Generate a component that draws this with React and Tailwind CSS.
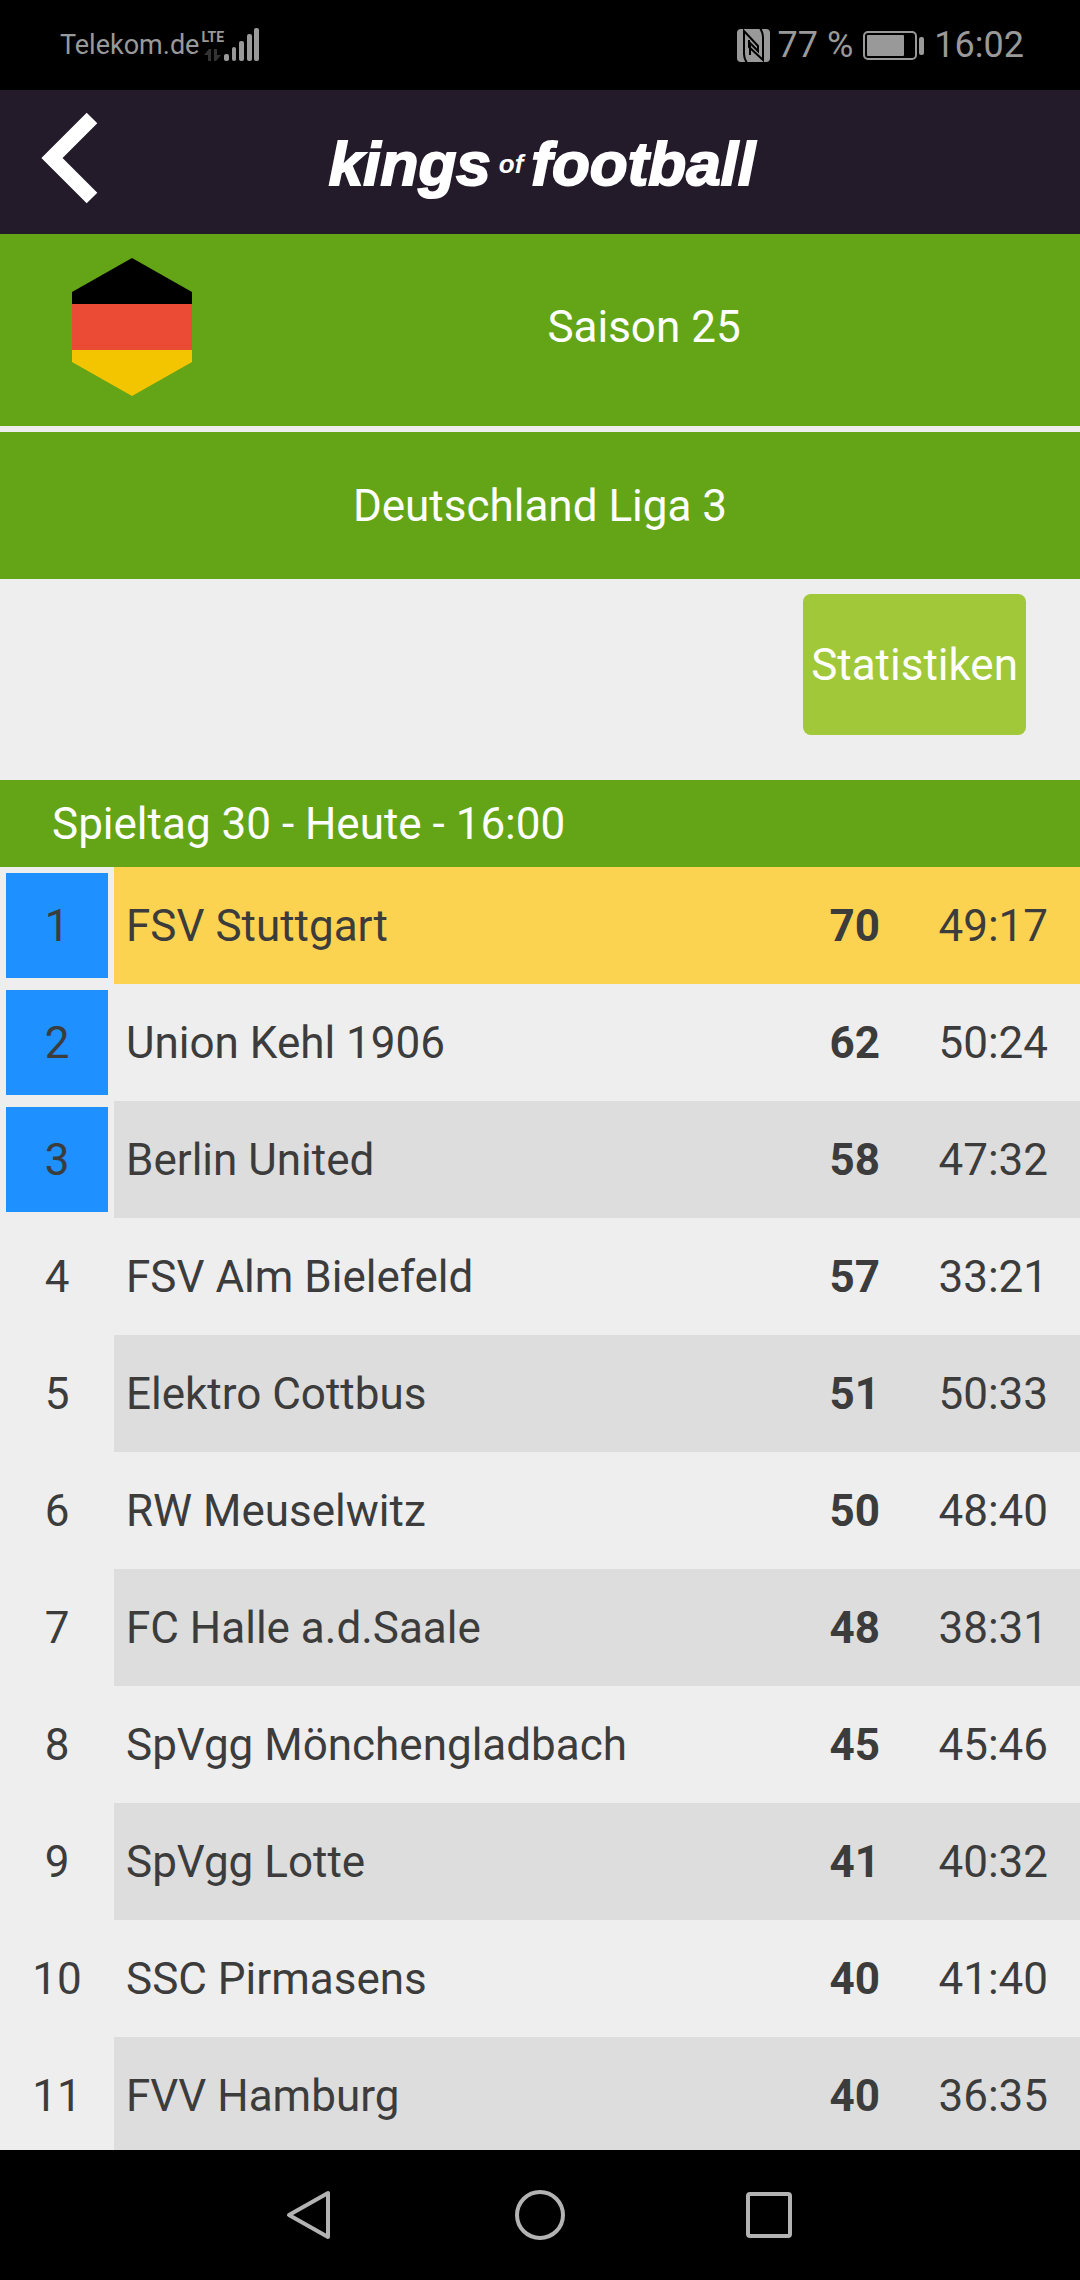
const teams = [
  { rank: 1, name: "FSV Stuttgart", points: 70, goals: "49:17" },
  { rank: 2, name: "Union Kehl 1906", points: 62, goals: "50:24" },
  { rank: 3, name: "Berlin United", points: 58, goals: "47:32" },
  { rank: 4, name: "FSV Alm Bielefeld", points: 57, goals: "33:21" },
  { rank: 5, name: "Elektro Cottbus", points: 51, goals: "50:33" },
  { rank: 6, name: "RW Meuselwitz", points: 50, goals: "48:40" },
  { rank: 7, name: "FC Halle a.d.Saale", points: 48, goals: "38:31" },
  { rank: 8, name: "SpVgg Mönchengladbach", points: 45, goals: "45:46" },
  { rank: 9, name: "SpVgg Lotte", points: 41, goals: "40:32" },
  { rank: 10, name: "SSC Pirmasens", points: 40, goals: "41:40" },
  { rank: 11, name: "FVV Hamburg", points: 40, goals: "36:35" },
]

const OWN_TEAM = "FSV Stuttgart"
const PROMOTION_RANKS = 3

const SignalIcon = () => (
  <svg width="36" height="34" viewBox="0 0 36 34" fill="currentColor">
    <rect x="0" y="26" width="5" height="7" rx="2" />
    <rect x="8" y="19" width="4" height="14" rx="2" />
    <rect x="15" y="13" width="5" height="20" rx="2" />
    <rect x="23" y="6" width="5" height="27" rx="2" />
    <rect x="30" y="0" width="5" height="33" rx="2" />
  </svg>
)

const DataArrowsIcon = () => (
  <svg width="18" height="13" viewBox="0 0 18 13" fill="#333333">
    <path d="M5 0h2v12H4V6H0z" />
    <path d="M10 0h3v6h4l-5 6h-2z" />
  </svg>
)

const NfcIcon = () => (
  <svg width="33" height="33" viewBox="0 0 33 33">
    <rect width="33" height="33" rx="4" fill="currentColor" />
    <g fill="none" stroke="#000000" strokeWidth="2">
      <path d="M10 34C8 31 7 29 7 25V2l14 15v5l-8-8v12" />
      <path d="M23 -1c2 3 3 5 3 9v23L12 18v-7" />
    </g>
  </svg>
)

const BatteryIcon = () => (
  <svg width="61" height="29" viewBox="0 0 61 29">
    <rect x="1" y="1" width="52" height="27" rx="4" fill="none" stroke="currentColor" strokeWidth="2" />
    <rect x="4" y="4" width="37" height="21" rx="1" fill="currentColor" />
    <rect x="56" y="6" width="5" height="18" rx="2" fill="currentColor" />
  </svg>
)

const GermanyFlag = () => (
  <svg width="120" height="138" viewBox="0 0 120 138" role="img" aria-label="Deutschland">
    <path d="M60 0l60 34v12H0V34z" fill="#000000" />
    <path d="M0 46h120v46H0z" fill="#eb4b35" />
    <path d="M0 92h120v12l-60 34-60-34z" fill="#f3c500" />
  </svg>
)

const StatusBar = () => (
  <div className="flex h-[90px] shrink-0 items-center justify-between bg-black pr-14 pl-15 text-[#999999]">
    <div className="flex items-center">
      <span className="text-[27px]">Telekom.de</span>
      <div className="ml-0.5 flex flex-col items-center gap-1">
        <span className="text-[14px] leading-4 font-bold">LTE</span>
        <DataArrowsIcon />
      </div>
      <SignalIcon />
    </div>
    <div className="flex items-center text-[36px]">
      <NfcIcon />
      <span className="ml-2">77 %</span>
      <span className="mx-2.5">
        <BatteryIcon />
      </span>
      <span>16:02</span>
    </div>
  </div>
)

const Header = () => (
  <header className="grid h-36 shrink-0 grid-cols-[1fr_auto_1fr] items-center bg-[#231b2a] text-white">
    <button type="button" aria-label="Zurück" className="mb-2 ml-10 w-fit cursor-pointer">
      <svg width="60" height="92" viewBox="0 0 60 92" fill="none" stroke="currentColor" strokeWidth="15">
        <path d="M52 6L12 46l40 40" />
      </svg>
    </button>
    <h1 className="flex items-center gap-2 pt-1 pl-1 font-['Liberation_Sans',sans-serif] text-[62px] leading-none font-bold italic">
      <span className="[-webkit-text-stroke:2px_white]">kings</span>
      <span className="text-[26px]">of</span>
      <span className="[-webkit-text-stroke:2px_white]">football</span>
    </h1>
  </header>
)

const TableRow = ({ team }) => {
  const isOwn = team.name === OWN_TEAM
  const rowColor = isOwn ? "bg-[#fcd350]" : team.rank % 2 ? "bg-[#dddddd]" : "bg-[#eeeeee]"

  return (
    <tr className="h-[117px]">
      <td className="p-1.5">
        <div
          className={`flex h-[105px] items-center justify-center ${
            team.rank <= PROMOTION_RANKS ? "bg-[#1e90ff]" : ""
          }`}
        >
          {team.rank}
        </div>
      </td>
      <td className={`pl-3 whitespace-nowrap ${rowColor}`}>{team.name}</td>
      <td className={`text-right font-bold ${rowColor}`}>{team.points}</td>
      <td className={`pr-8 text-right ${rowColor}`}>{team.goals}</td>
    </tr>
  )
}

const NavBar = () => (
  <nav className="flex h-[130px] shrink-0 items-center justify-center gap-45 bg-black text-[#b3b3b3]">
    <button type="button" aria-label="Zurück">
      <svg width="50" height="50" viewBox="0 0 50 50" fill="none" stroke="currentColor" strokeWidth="4" strokeLinejoin="round">
        <path d="M43 3v44L4 25z" />
      </svg>
    </button>
    <button type="button" aria-label="Startseite">
      <svg width="50" height="50" viewBox="0 0 50 50" fill="none" stroke="currentColor" strokeWidth="4">
        <circle cx="25" cy="25" r="23" />
      </svg>
    </button>
    <button type="button" aria-label="Übersicht">
      <svg width="50" height="50" viewBox="0 0 50 50" fill="none" stroke="currentColor" strokeWidth="4">
        <rect x="3" y="4" width="42" height="42" rx="2" />
      </svg>
    </button>
  </nav>
)

const App = () => {
  return (
    <div className="flex h-screen flex-col bg-[#eeeeee] font-[Roboto,sans-serif]">
      <StatusBar />
      <Header />

      <main className="min-h-0 flex-1 overflow-y-auto text-[44px] text-[#3c3c3c] [scrollbar-width:none]">
        <section className="flex items-center gap-22 bg-[#64a517] px-18 pt-6 pb-[30px] text-white">
          <GermanyFlag />
          <h2 className="flex-1 text-center">Saison 25</h2>
        </section>

        <section className="mt-1.5 flex h-[147px] items-center justify-center bg-[#64a517] text-white">
          <h2>Deutschland Liga 3</h2>
        </section>

        <div className="flex justify-end pt-[15px] pr-[54px] pb-[45px]">
          <button type="button" className="h-[141px] cursor-pointer rounded-lg bg-[#a0c838] px-2 text-white">
            Statistiken
          </button>
        </div>

        <h3 className="flex h-[87px] items-center bg-[#64a517] pl-13 text-white">
          Spieltag 30 - Heute - 16:00
        </h3>

        <table className="w-full table-fixed border-separate border-spacing-0">
          <colgroup>
            <col className="w-[114px]" />
            <col />
            <col className="w-30" />
            <col className="w-50" />
          </colgroup>
          <tbody>
            {teams.map(team => (
              <TableRow key={team.rank} team={team} />
            ))}
          </tbody>
        </table>
      </main>

      <NavBar />
    </div>
  )
}

export default App
